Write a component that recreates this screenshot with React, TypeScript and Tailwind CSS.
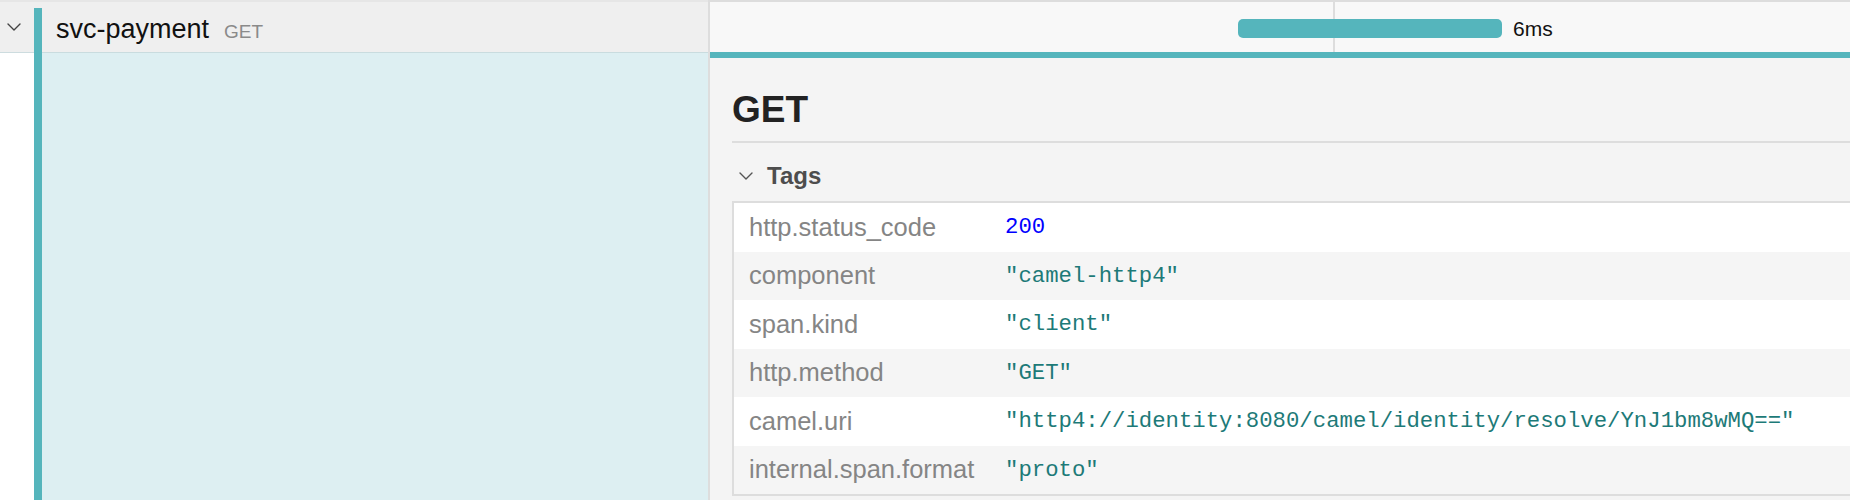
import React from "react";

type Tag = {
  key: string;
  value: string;
  kind: "string" | "number";
};

const tags: Tag[] = [
  { key: "http.status_code", value: "200", kind: "number" },
  { key: "component", value: '"camel-http4"', kind: "string" },
  { key: "span.kind", value: '"client"', kind: "string" },
  { key: "http.method", value: '"GET"', kind: "string" },
  {
    key: "camel.uri",
    value: '"http4://identity:8080/camel/identity/resolve/YnJ1bm8wMQ=="',
    kind: "string",
  },
  { key: "internal.span.format", value: '"proto"', kind: "string" },
];

function Chevron({ className }: { className?: string }) {
  return (
    <svg viewBox="0 0 14 8" className={className} fill="none">
      <polyline
        points="1,1 7,7 13,1"
        stroke="currentColor"
        strokeWidth="1.4"
        strokeLinecap="round"
        strokeLinejoin="round"
      />
    </svg>
  );
}

export default function App() {
  return (
    <div
      className="flex h-[500px] w-[1850px] overflow-hidden bg-white"
      style={{ fontFamily: '"Liberation Sans", Arial, sans-serif' }}
    >
      {/* left: span name column */}
      <div className="flex w-[708px] shrink-0">
        <div className="flex w-[34px] flex-col">
          <div className="flex h-[53px] items-center border-t-2 border-b border-t-[#e6e6e6] border-b-[#cddcdf] bg-[#efefef] pl-[7px] text-[#444]">
            <Chevron className="h-[8px] w-[14px]" />
          </div>
          <div className="flex-1 bg-white" />
        </div>
        <div className="flex w-[8px] flex-col">
          <div className="h-[8px] border-t-2 border-t-[#e6e6e6] bg-[#efefef]" />
          <div className="flex-1 bg-[#55b5bc]" />
        </div>
        <div className="flex flex-1 flex-col">
          <div className="flex h-[53px] items-center border-t-2 border-b border-t-[#e6e6e6] border-b-[#c9dcdf] bg-[#efefef] pl-[14px]">
            <div className="mt-[5px] flex items-baseline gap-[15px]">
              <span className="text-[27px] leading-none text-[#111]">svc-payment</span>
              <span className="text-[19px] leading-none text-[#8a8a8a]">GET</span>
            </div>
          </div>
          <div className="flex-1 bg-[#ddeff2]" />
        </div>
      </div>

      <div className="w-[2px] shrink-0 bg-[#dddddd]" />

      {/* right: timeline + detail */}
      <div className="flex flex-1 flex-col bg-[#f4f4f4]">
        <div className="relative h-[52px] shrink-0 border-t-2 border-t-[#dddddd] bg-[#f8f8f8]">
          <div className="absolute top-0 bottom-0 left-[623px] w-[2px] bg-[#dddddd]" />
          <div className="absolute top-[15px] left-[528px] flex items-center gap-[11px]">
            <div className="h-[19px] w-[264px] rounded-[5px] bg-[#55b5bc]" />
            <span className="mt-[1px] text-[21px] leading-none text-[#111]">6ms</span>
          </div>
        </div>
        <div className="h-[6px] shrink-0 bg-[#55b5bc]" />

        <div className="flex flex-1 flex-col pl-[22px]">
          <h1 className="mt-[33px] text-[37px] leading-none font-bold text-[#222]">GET</h1>
          <div className="mt-[13px] h-[2px] bg-[#dddddd]" />
          <div className="mt-[21px] flex items-center gap-[14px] pl-[7px]">
            <Chevron className="h-[8px] w-[14px] text-[#555]" />
            <span className="text-[24px] leading-none font-bold text-[#4d4d4d]">Tags</span>
          </div>
          <div className="mt-[13px] border-t-2 border-b-2 border-l-2 border-[#dddddd]">
            {tags.map((tag, i) => (
              <div
                key={tag.key}
                className={`flex h-[48.5px] items-center ${i % 2 === 0 ? "bg-white" : "bg-[#f5f5f5]"}`}
              >
                <div className="w-[271px] shrink-0 pl-[15px] text-[25.5px] leading-none text-[#858585]">
                  {tag.key}
                </div>
                <div
                  className={`text-[22.3px] leading-none whitespace-nowrap ${tag.kind === "number" ? "text-[#0000ff]" : "text-[#1d7a78]"}`}
                  style={{ fontFamily: '"Liberation Mono", "Courier New", monospace' }}
                >
                  {tag.value}
                </div>
              </div>
            ))}
          </div>
        </div>
      </div>
    </div>
  );
}
